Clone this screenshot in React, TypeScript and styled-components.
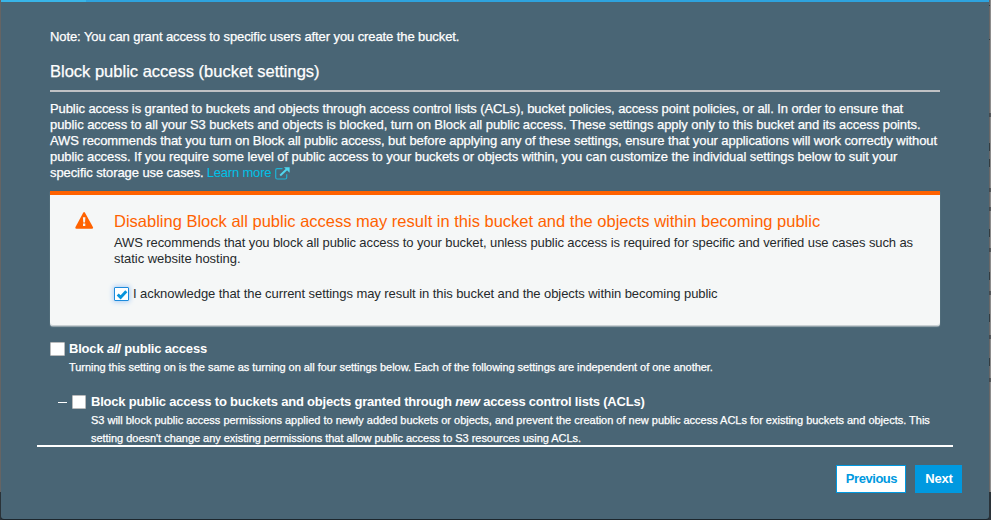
import React from 'react';
import styled, { createGlobalStyle } from 'styled-components';

const GlobalStyle = createGlobalStyle`
  * { box-sizing: border-box; }
  body { margin: 0; overflow: hidden; }
`;

const Backdrop = styled.div`
  display: grid;
  grid-template-columns: 1px 988px 2px;
  width: 991px;
  height: 520px;
  background: linear-gradient(#656464 492px, #2a3238 492px);
  font: 13px/16px 'Liberation Sans', Arial, sans-serif;
`;

const Dialog = styled.main`
  grid-column: 2;
  display: flex;
  flex-direction: column;
  height: 519px;
  background: #496575;
  border-bottom-left-radius: 3px;
  border-bottom-right-radius: 3px;
  box-shadow: 0 1px 0 #1c262d;
  color: #fff;
`;

const Progress = styled.div`
  flex: none;
  height: 2px;
  background: linear-gradient(100deg, #38b5e8 84px, #2ea3de 84px);
`;

const Content = styled.div`
  display: flex;
  flex-direction: column;
  height: 443px;
  flex: none;
  padding: 27px 49px 0;
  overflow: hidden;
  -webkit-text-stroke: 0.25px currentColor;

  > * { flex-shrink: 0; }
`;

const Line = styled.span<{ $track?: number }>`
  display: block;
  white-space: nowrap;
  letter-spacing: ${(p) => p.$track ?? 0}px;
`;

const SectionTitle = styled.h2`
  margin: 16px 0 0;
  height: 31px;
  border-bottom: 2px solid #c0c2c5;
  font-size: 16.5px;
  line-height: 20px;
  font-weight: 400;
`;

const Intro = styled.p`
  margin: 9px 0 0;
`;

const LastIntroLine = styled.div`
  display: flex;
  height: 16px;
`;

const Link = styled.a`
  display: flex;
  gap: 4px;
  margin-left: 3px;
  color: #00c1e8;
  -webkit-text-stroke: 0;

  svg { margin-top: 2px; }
`;

const Alert = styled.section`
  display: grid;
  grid-template-columns: 64px 1fr;
  width: 890px;
  height: 135px;
  margin-top: 10px;
  padding-top: 16px;
  border-top: 4px solid #ff6200;
  border-radius: 0 0 3px 3px;
  background: #f5f7f7;
  box-shadow: inset 0 -1px 0 #c9d0d3, 0 1px 1px #9aa8b0;
  color: #262a2c;
  -webkit-text-stroke: 0;

  > svg { margin: 1px 0 0 25px; }
`;

const AlertTitle = styled.h3`
  margin: 0;
  height: 24px;
  font-size: 16.5px;
  line-height: 20px;
  font-weight: 400;
  color: #ff6200;
`;

const AlertText = styled.p`
  margin: 0;
`;

const Acknowledge = styled.label`
  display: flex;
  align-items: center;
  gap: 4px;
  margin-top: 19px;
`;

const CheckBox = styled.span<{ $checked?: boolean; $small?: boolean }>`
  flex: none;
  display: flex;
  align-items: center;
  justify-content: center;
  width: ${(p) => (p.$small ? 14 : 15)}px;
  height: 14px;
  border: 1px solid ${(p) => (p.$checked ? '#1d8bdc' : '#b9babb')};
  border-radius: 1px;
  background: #fff;
  box-shadow: ${(p) => (p.$checked ? '0 0 5px 1px #a9cdf5' : 'none')};
`;

const Option = styled.div<{ $nested?: boolean }>`
  display: grid;
  grid-template-columns: ${(p) => (p.$nested ? '14px 19px 1fr' : '19px 1fr')};
  margin: ${(p) => (p.$nested ? '18px 0 0 8px' : '15px 0 0')};
`;

const OptionTitle = styled.div`
  height: 17px;
  font-weight: 700;
  -webkit-text-stroke: 0;
`;

const OptionText = styled.div`
  font-size: 11px;
  line-height: 18px;
`;

const BoxCell = styled.div`
  padding-top: 1px;
`;

const Dash = styled.div`
  width: 9px;
  height: 1px;
  margin-top: 8px;
  background: #fff;
`;

const Footer = styled.footer`
  display: flex;
  justify-content: flex-end;
  gap: 9px;
  margin: 0 27px 0 36px;
`;

const Divider = styled.div`
  flex: none;
  height: 2px;
  margin: 0 36px 18px;
  background: #fff;
`;

const Button = styled.button<{ $primary?: boolean }>`
  width: ${(p) => (p.$primary ? 47 : 70)}px;
  height: 28px;
  padding: 0 0 0 1px;
  border: 1px solid #0099e0;
  background: ${(p) => (p.$primary ? '#0099e0' : '#fff')};
  color: ${(p) => (p.$primary ? '#fff' : '#0099e0')};
  font: 700 13px/26px 'Liberation Sans', Arial, sans-serif;
  letter-spacing: ${(p) => (p.$primary ? -0.2 : -0.45)}px;
`;

const Page = styled.aside`
  grid-column: 3;
  height: 492px;
  background: linear-gradient(90deg, #686666 1px, #8d8d8d 1px);

  svg { display: block; }
`;

const ExternalIcon = () => (
  <svg width="15" height="13" viewBox="0 0 15 13" fill="none" stroke="currentColor" strokeLinejoin="round">
    <path d="M7.5 1.7H2.2Q.7 1.7.7 3.2v7.3Q.7 12 2.2 12h8q1.5 0 1.5-1.5V7.3" stroke="#20b3d5" strokeWidth="1.2" />
    <path d="M5.2 8.5 12 2" stroke="#50d7ef" strokeWidth="1.9" />
    <path d="M9 .3h5.6v5.5z" fill="#50d7ef" stroke="none" />
  </svg>
);

const WarningIcon = () => (
  <svg width="19" height="18" viewBox="0 0 19 18">
    <path d="M8.2.8Q9.1-.6 10 .8l7.9 14.1q.7 1.8-1 1.8H1.5q-1.7 0-1-1.8z" fill="#ff6200" />
    <path d="M7.9 5.2h2.5l-.4 5.2H8.3zM8 11.6h2.3v2.3H8z" fill="#f5f7f7" />
  </svg>
);

const CheckIcon = () => (
  <svg width="12" height="11" viewBox="0 0 12 11">
    <path d="M1.7 5.5 4.6 8.4 10.3 2.2" fill="none" stroke="#0794dc" strokeWidth="2.9" />
  </svg>
);

/* Slivers of the page's own text and row lines that show beside the dialog. */
const marks: [number, number][] = [
  [5, 0], [39, 0], [113, 4], [143, 8], [159, 8], [188, 4], [207, 4], [229, 8],
  [248, 4], [272, 8], [291, 4], [314, 8], [335, 4], [358, 8], [378, 4],
];

const PageEdge = () => (
  <svg width="2" height="492">
    {marks.map(([y, h]) => (
      <rect key={y} x={0} y={y} width={h === 4 ? 2 : 1} height={h || 1} fill="#30363a" opacity={h === 4 ? 0.6 : 0.9} />
    ))}
  </svg>
);

export default function App() {
  return (
    <Backdrop>
      <GlobalStyle />
      <Dialog>
        <Progress />
        <Content>
          <Line $track={-0.095}>Note: You can grant access to specific users after you create the bucket.</Line>
          <SectionTitle><Line>Block public access (bucket settings)</Line></SectionTitle>
          <Intro>
            <Line $track={-0.09}>Public access is granted to buckets and objects through access control lists (ACLs), bucket policies, access point policies, or all. In order to ensure that</Line>
            <Line $track={-0.064}>public access to all your S3 buckets and objects is blocked, turn on Block all public access. These settings apply only to this bucket and its access points.</Line>
            <Line $track={-0.082}>AWS recommends that you turn on Block all public access, but before applying any of these settings, ensure that your applications will work correctly without</Line>
            <Line $track={-0.078}>public access. If you require some level of public access to your buckets or objects within, you can customize the individual settings below to suit your</Line>
          </Intro>
          <LastIntroLine>
            <Line $track={-0.09}>specific storage use cases.</Line>
            <Link>
              <Line $track={-0.18}>Learn more</Line>
              <ExternalIcon />
            </Link>
          </LastIntroLine>
          <Alert>
            <WarningIcon />
            <div>
              <AlertTitle><Line>Disabling Block all public access may result in this bucket and the objects within becoming public</Line></AlertTitle>
              <AlertText>
                <Line $track={-0.101}>AWS recommends that you block all public access to your bucket, unless public access is required for specific and verified use cases such as</Line>
                <Line $track={-0.03}>static website hosting.</Line>
              </AlertText>
              <Acknowledge>
                <CheckBox $checked><CheckIcon /></CheckBox>
                <Line $track={-0.07}>I acknowledge that the current settings may result in this bucket and the objects within becoming public</Line>
              </Acknowledge>
            </div>
          </Alert>
          <Option>
            <BoxCell><CheckBox /></BoxCell>
            <div>
              <OptionTitle><Line $track={-0.19}>Block <em>all</em> public access</Line></OptionTitle>
              <OptionText><Line $track={-0.042}>Turning this setting on is the same as turning on all four settings below. Each of the following settings are independent of one another.</Line></OptionText>
            </div>
          </Option>
          <Option $nested>
            <Dash />
            <BoxCell><CheckBox $small /></BoxCell>
            <div>
              <OptionTitle><Line $track={-0.206}>Block public access to buckets and objects granted through <em>new</em> access control lists (ACLs)</Line></OptionTitle>
              <OptionText>
                <Line $track={-0.01}>S3 will block public access permissions applied to newly added buckets or objects, and prevent the creation of new public access ACLs for existing buckets and objects. This</Line>
                <Line $track={-0.03}>setting doesn't change any existing permissions that allow public access to S3 resources using ACLs.</Line>
              </OptionText>
            </div>
          </Option>
        </Content>
        <Divider />
        <Footer>
          <Button>Previous</Button>
          <Button $primary>Next</Button>
        </Footer>
      </Dialog>
      <Page><PageEdge /></Page>
    </Backdrop>
  );
}
